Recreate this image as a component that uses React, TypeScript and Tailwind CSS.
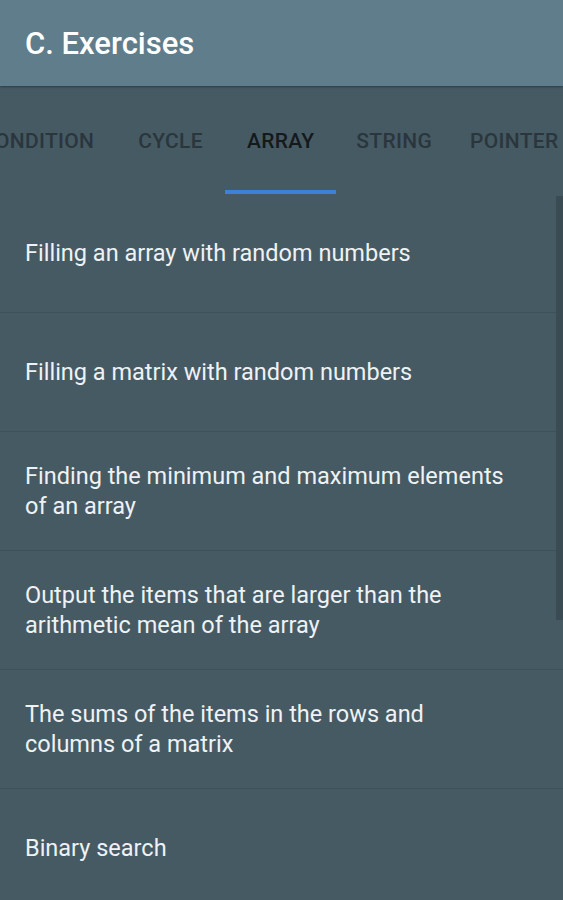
import React from 'react';

// tab label + horizontal padding (the strip is scrolled, so the first tab is cut)
const tabs = [
  { label: 'CONDITION', pad: 'px-[22px]' },
  { label: 'CYCLE', pad: 'px-[22px]' },
  { label: 'ARRAY', pad: 'px-[22px]' },
  { label: 'STRING', pad: 'pl-[20px] pr-[19px]' },
  { label: 'POINTER', pad: 'pl-[19px] pr-[19px]' },
];

const items = [
  'Filling an array with random numbers',
  'Filling a matrix with random numbers',
  'Finding the minimum and maximum elements of an array',
  'Output the items that are larger than the arithmetic mean of the array',
  'The sums of the items in the rows and columns of a matrix',
  'Binary search',
];

const App: React.FC = () => {
  return (
    <div className="w-[563px] h-[900px] overflow-hidden bg-[#465a64] font-['Roboto','Liberation_Sans',sans-serif]">
      {/* App bar */}
      <div className="h-[86px] bg-[#607d8c] flex items-center px-[25px] pt-[3px] shadow-[0_1px_2px_rgba(0,0,0,0.35)] relative z-10">
        <h1 className="text-[31px] font-medium text-white">C. Exercises</h1>
      </div>

      {/* Tabs */}
      <div className="h-[108px] overflow-hidden">
        <div className="flex h-full -ml-[41px]">
          {tabs.map((t) => (
            <div key={t.label} className={`relative flex-shrink-0 h-full flex items-center pt-[3px] ${t.pad}`}>
              <span
                className={
                  t.label === 'ARRAY'
                    ? 'text-[21px] font-medium text-[#14191c] tracking-[0.3px]'
                    : 'text-[21px] font-medium text-[#2a363c] tracking-[0.3px]'
                }
              >
                {t.label}
              </span>
              {t.label === 'ARRAY' && <div className="absolute left-0 right-0 bottom-0 h-[4px] bg-[#3f80d9]" />}
            </div>
          ))}
        </div>
      </div>

      {/* List */}
      <div className="relative">
        {items.map((item) => (
          <div key={item} className="h-[119px] border-b border-[#3e5058] flex items-center pl-[25px] pr-[53px]">
            <span className="text-[23.5px] leading-[30px] text-[#eef2f4]">{item}</span>
          </div>
        ))}
        <div className="absolute right-0 top-[2px] w-[7px] h-[424px] bg-[#3b4b53]" />
      </div>
    </div>
  );
};

export default App;
